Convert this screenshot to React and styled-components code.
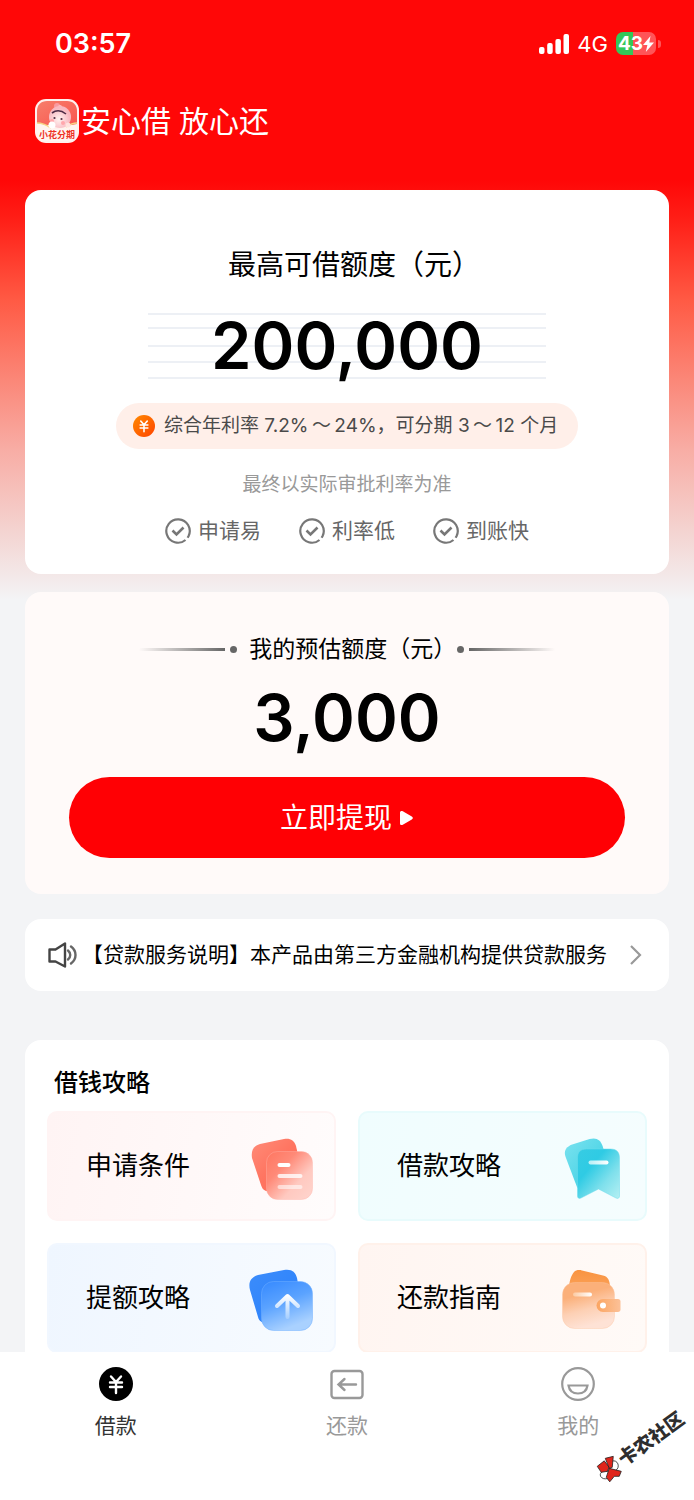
import styled, { createGlobalStyle } from 'styled-components';

const GlobalStyle = createGlobalStyle`
  * {
    box-sizing: border-box;
  }

  body {
    margin: 0;
    background: #f3f4f6;
    color: #000;
    font-family: Inter, "Noto Sans CJK SC", sans-serif;
    line-height: 1.4;
  }

  a {
    color: inherit;
    text-decoration: none;
  }

  h1, h2, p {
    margin: 0;
    font-weight: 400;
  }
`;

const Page = styled.div`
  height: 100vh;
  display: flex;
  flex-direction: column;
`;

const Content = styled.main`
  flex: 1;
  min-height: 0;
  overflow-y: auto;
  scrollbar-width: none;
  padding: 0 25px;
  background: #f3f4f6 linear-gradient(
    #ff0707 180px,
    #ff1f17 220px,
    #ff5a44 300px,
    #fb8778 380px,
    #f8ada5 450px,
    #f4d3d0 530px,
    #f3e8e8 575px,
    #f3f4f6 600px
  ) no-repeat;
`;

const StatusBar = styled.div`
  display: flex;
  align-items: center;
  justify-content: space-between;
  height: 88px;
  padding: 0 8px 0 30px;
  color: #fff;
`;

const Clock = styled.time`
  font-size: 27px;
  font-weight: 600;
`;

const StatusIcons = styled.div`
  display: flex;
  align-items: center;
  gap: 8px;
  font-size: 22px;
`;

const Battery = styled.span`
  display: flex;
  align-items: center;
  gap: 2px;

  &::after {
    content: '';
    width: 3px;
    height: 8px;
    border-radius: 0 4px 4px 0;
    background: #ff5457;
  }
`;

const BatteryLevel = styled.span`
  display: flex;
  align-items: center;
  justify-content: center;
  width: 40px;
  height: 23px;
  border-radius: 7px;
  background: linear-gradient(90deg, #34c759 43%, #ff5457 43%);
  font-size: 19px;
  font-weight: 700;
`;

const Brand = styled.header`
  display: flex;
  align-items: center;
  gap: 2px;
  height: 66px;
  margin-bottom: 36px;
  padding-left: 10px;
`;

const Slogan = styled.p`
  display: flex;
  gap: 8px;
  color: #fff;
  font-size: 30px;
  line-height: 40px;
`;

const Card = styled.section`
  border-radius: 16px;
  background: ${props => props.$tint || '#fff'};
`;

const HeroCard = styled(Card)`
  display: flex;
  flex-direction: column;
  align-items: center;
  padding: 55px 16px 27px;
`;

const HeroTitle = styled.h1`
  font-size: 28px;
  line-height: 40px;
`;

/* trims the blank half of a full-width bracket */
const Bracket = styled.span`
  font-feature-settings: "halt";
`;

const Amount = styled.p`
  font-size: 65px;
  font-weight: 600;
  line-height: 66px;
  text-align: center;
`;

const RuledAmount = styled(Amount)`
  width: 398px;
  max-width: 100%;
  margin: 28px 0 24px;
  background:
    linear-gradient(#edf0f5, #edf0f5) 0 0 / 100% 2px,
    linear-gradient(#edf0f5, #edf0f5) 0 14px / 100% 2px,
    linear-gradient(#edf0f5, #edf0f5) 0 32px / 100% 2px,
    linear-gradient(#edf0f5, #edf0f5) 0 48px / 100% 2px,
    linear-gradient(#edf0f5, #edf0f5) 0 64px / 100% 2px;
  background-repeat: no-repeat;
`;

const RatePill = styled.p`
  display: flex;
  align-items: center;
  gap: 9px;
  width: 462px;
  max-width: 100%;
  height: 46px;
  padding-left: 17px;
  border-radius: 23px;
  background: #ffefe9;
  color: #4a4a4a;
  font-size: 19px;
  white-space: nowrap;
`;

const Note = styled.p`
  margin: 22px 0 16px;
  color: #999;
  font-size: 19px;
  line-height: 28px;
`;

const Features = styled.ul`
  display: flex;
  gap: 38px;
  margin: 0;
  padding: 0;
  list-style: none;
`;

const Feature = styled.li`
  display: flex;
  align-items: center;
  gap: 7px;
  color: #666;
  font-size: 21px;
  line-height: 32px;
`;

const EstimateCard = styled(Card)`
  margin-top: 18px;
  padding: 41px 44px 36px;
`;

const EstimateTitle = styled.h2`
  display: flex;
  align-items: center;
  justify-content: center;
  gap: 12px;
  margin-bottom: 20px;
  font-size: 23px;
  line-height: 32px;
`;

const Rule = styled.span`
  display: flex;
  align-items: center;
  gap: 5px;
  flex-direction: ${props => (props.$right ? 'row-reverse' : 'row')};

  &::before {
    content: '';
    width: 86px;
    height: 3px;
    background: linear-gradient(${props => (props.$right ? '270deg' : '90deg')}, transparent, #666);
  }

  &::after {
    content: '';
    width: 7px;
    height: 7px;
    border-radius: 50%;
    background: #666;
  }
`;

const WithdrawButton = styled.button`
  display: flex;
  align-items: center;
  justify-content: center;
  gap: 7px;
  width: 100%;
  height: 81px;
  margin-top: 26px;
  border: 0;
  border-radius: 41px;
  background: #ff0004;
  color: #fff;
  font-family: inherit;
  font-size: 28px;
  line-height: 40px;
`;

const Notice = styled.a`
  display: flex;
  align-items: center;
  gap: 4px;
  height: 72px;
  margin: 25px 0 49px;
  padding: 0 27px 0 23px;
  border-radius: 16px;
  background: #fff;
  font-size: 21px;

  svg {
    flex: none;
  }
`;

const NoticeText = styled.span`
  flex: 1;
  overflow: hidden;
  white-space: nowrap;
`;

const GuideCard = styled(Card)`
  padding: 27px 22px 22px;
`;

const GuideTitle = styled.h2`
  margin-bottom: 12px;
  padding-left: 7px;
  font-size: 24px;
  font-weight: 500;
  line-height: 32px;
`;

const GuideGrid = styled.div`
  display: grid;
  grid-template-columns: 1fr 1fr;
  gap: 22px;
`;

const GuideTile = styled.a`
  display: flex;
  align-items: center;
  justify-content: space-between;
  height: 110px;
  padding: 0 16px 0 37px;
  border: 2px solid ${props => props.$edge};
  border-radius: 10px;
  background: linear-gradient(100deg, ${props => props.$from}, ${props => props.$to});
  font-size: 26px;
`;

const TabBar = styled.nav`
  display: grid;
  grid-template-columns: repeat(3, 1fr);
  height: 148px;
  padding-top: 15px;
  background: #fff;
`;

const Tab = styled.a`
  display: flex;
  flex-direction: column;
  align-items: center;
  gap: 9px;
  color: ${props => (props.$active ? '#333' : '#999')};
  font-size: 21px;
  line-height: 32px;
`;

const Watermark = styled.div`
  position: absolute;
  right: 2px;
  bottom: 40px;
  display: flex;
  align-items: center;
  color: #2e2e2e;
  font-size: 19px;
  font-weight: 900;
  line-height: 24px;
  transform: rotate(-36deg);
  pointer-events: none;
`;

const SignalIcon = () => (
  <svg width="30" height="20" viewBox="0 0 30 20" fill="#fff" aria-hidden="true">
    <rect x="0" y="13" width="5.500" height="7" rx="2" />
    <rect x="8.200" y="9" width="5.500" height="11" rx="2" />
    <rect x="16.400" y="5" width="5.500" height="15" rx="2" />
    <rect x="24.500" y="0" width="5.500" height="20" rx="2" />
  </svg>
);

const BoltIcon = () => (
  <svg width="11" height="16" viewBox="0 0 11 16" fill="#fff" aria-hidden="true">
    <path d="M7.500 0 0 9h4.400L2.800 16 11 6.600H6.300z" />
  </svg>
);

const AppIcon = () => (
  <svg width="44" height="44" viewBox="0 0 44 44" role="img" aria-label="小花分期">
    <defs>
      <linearGradient id="app-bg" x1="0" y1="0" x2="1" y2="1">
        <stop offset="0" stopColor="#f77e6c" />
        <stop offset="1" stopColor="#f9564e" />
      </linearGradient>
      <radialGradient id="app-face" cx=".45" cy=".6">
        <stop offset="0" stopColor="#fff3f1" />
        <stop offset="1" stopColor="#f8b8c0" />
      </radialGradient>
    </defs>
    <rect width="44" height="44" rx="11" fill="#fff0ed" />
    <path d="M2 26V12C2 6 6 2 12 2h20c6 0 10 4 10 10v14z" fill="url(#app-bg)" />
    <path d="M2 24c9 1 14 6 20 6s12-4 20-5v8H2z" fill="#fff4ed" />
    <path d="M2 24c7 0 11 3 14 5M42 24c-5 0-8 2-11 4" stroke="#f7d483" strokeWidth="1.500" fill="none" />
    <circle cx="22" cy="7" r="3" fill="#f99aa0" />
    <circle cx="25" cy="8" r="2" fill="#ffc0c2" />
    <circle cx="25" cy="18" r="11" fill="url(#app-face)" />
    <path d="M17 14c4-3 9-3 14 1" stroke="#4c2b45" strokeWidth="1.600" fill="none" />
    <circle cx="19.500" cy="19" r="1.100" fill="#553043" />
    <circle cx="26.500" cy="20" r="1.100" fill="#553043" />
    <circle cx="17" cy="22" r="2" fill="#ffa7ac" />
    <circle cx="28" cy="24" r="2" fill="#ffa7ac" />
    <circle cx="17" cy="26" r="3.500" fill="#fff" />
    <circle cx="33" cy="26" r="2.500" fill="#ffe3df" />
    <rect x="3" y="30" width="38" height="12" rx="5" fill="#fff4f1" />
    <text x="22" y="39" textAnchor="middle" fontSize="9" fontWeight="700" fill="#ee3124">小花分期</text>
  </svg>
);

const YuanStrokes = () => (
  <path
    d="M12 9.500 17 15l5-5.500M11 15.500h12M11 20h12M17 15v11"
    fill="none"
    stroke="#fff"
    strokeWidth="2.400"
    strokeLinecap="round"
  />
);

const CoinIcon = () => (
  <svg width="22" height="22" viewBox="0 0 34 34" aria-hidden="true">
    <defs>
      <linearGradient id="coin" x1="0" y1="0" x2="1" y2="1">
        <stop offset="0" stopColor="#ff8a00" />
        <stop offset="1" stopColor="#ff4300" />
      </linearGradient>
    </defs>
    <circle cx="17" cy="17" r="17" fill="url(#coin)" />
    <YuanStrokes />
  </svg>
);

const CheckIcon = () => (
  <svg width="26" height="26" viewBox="0 0 26 26" fill="none" stroke="#777" aria-hidden="true">
    <path d="M20.500 22A11.700 11.700 0 1 1 23.600 18l-1 1.800" strokeWidth="2.200" />
    <path d="m7.500 12.500 4 4 7-7" strokeWidth="2.600" />
  </svg>
);

const PlayIcon = () => (
  <svg width="15" height="16" viewBox="0 0 15 16" fill="#fff" aria-hidden="true">
    <path d="M1 2.500C1 1 2.500.500 3.800 1.200l9 5.400c1.400.800 1.400 2 0 2.800l-9 5.400C2.500 15.500 1 15 1 13.500z" />
  </svg>
);

const SpeakerIcon = () => (
  <svg width="30" height="28" viewBox="0 0 30 28" fill="none" stroke="#444" strokeWidth="2.400" strokeLinejoin="round" aria-hidden="true">
    <path d="M1.500 8.500h6L17 2.500v23l-9.500-5h-6z" />
    <path d="M20 9.500c3 2.500 3 6.500 0 9M23 5.500c6 4.500 6 12.500 0 17" stroke="#666" strokeLinecap="round" />
  </svg>
);

const ChevronIcon = () => (
  <svg width="13" height="22" viewBox="0 0 13 22" fill="none" stroke="#999" strokeWidth="2.200" aria-hidden="true">
    <path d="m2 2 9 9-9 9" />
  </svg>
);

const Gradient = ({ id, stops, x2 = 1, y2 = 1 }) => (
  <linearGradient id={id} x1="0" y1="0" x2={x2} y2={y2}>
    {stops.map((color, i) => (
      <stop key={i} offset={i / (stops.length - 1)} stopColor={color} />
    ))}
  </linearGradient>
);

const ConditionIcon = () => (
  <svg width="72" height="72" viewBox="0 0 72 72" aria-hidden="true">
    <defs>
      <Gradient id="cond-back" stops={['#ff8b78', '#ff7460', '#ff6a57']} />
      <Gradient id="cond-front" stops={['#ff7660', '#ff8a78', '#ffc9c0', '#ffd5ce']} />
    </defs>
    <path d="M14 14 38 9c6-1 10 1 12 7l5 22-28 24-7-1c-3-1-4-3-5-6L6 28c-1-7 1-12 8-14z" fill="url(#cond-back)" />
    <rect x="20.500" y="21.500" width="46" height="48" rx="11" fill="url(#cond-front)" stroke="#ffb5a9" strokeOpacity=".4" />
    <g stroke="#fff" strokeWidth="4" strokeLinecap="round">
      <path d="M33.500 35h9" />
      <path d="M33.500 46h21" strokeOpacity=".8" />
      <path d="M33.500 57h21" strokeOpacity=".55" />
    </g>
  </svg>
);

const BookmarkIcon = () => (
  <svg width="72" height="72" viewBox="0 0 72 72" aria-hidden="true">
    <defs>
      <Gradient id="mark-back" stops={['#7be2ef', '#35cde2']} />
      <Gradient id="mark-front" stops={['#37cce3', '#2fcbe4', '#7fe0ec', '#b4f0f3']} />
      <Gradient id="mark-bar" stops={['#b6eff6', '#ffffff']} y2={0} />
    </defs>
    <path d="M20 57 8.600 27c-2-6 0-9 5-12l19-6c7-2 11 1 13 7l4 13-28 30z" fill="url(#mark-back)" />
    <path
      d="M29.500 19h24c6 0 9 3 9 9v38c0 2-1.500 3-3.500 2L41.500 59 24 68c-2 1-3.500 0-3.500-2V28c0-6 3-9 9-9z"
      fill="url(#mark-front)"
      stroke="#6edceb"
      strokeOpacity=".5"
    />
    <rect x="31.500" y="30.500" width="20" height="4" rx="2" fill="url(#mark-bar)" />
  </svg>
);

const RaiseIcon = () => (
  <svg width="72" height="72" viewBox="0 0 72 72" aria-hidden="true">
    <defs>
      <Gradient id="raise-back" stops={['#3b8cfb', '#2b81fb']} />
      <Gradient id="raise-front" stops={['#3589ff', '#5ba3ff', '#a9d1ff']} x2={0.4} />
      <linearGradient id="raise-arrow" gradientUnits="userSpaceOnUse" x1="41" y1="33" x2="41" y2="56">
        <stop offset="0" stopColor="#fff" />
        <stop offset="1" stopColor="#a8d0ff" />
      </linearGradient>
    </defs>
    <path d="M12 13 38 8c7-1 11 1 13 8l4 22-34 23c-5 0-8-2-9-6L4 28c-2-8 1-13 8-15z" fill="url(#raise-back)" />
    <rect x="15.500" y="19.500" width="51" height="49" rx="12" fill="url(#raise-front)" stroke="#6fb0ff" strokeOpacity=".5" />
    <path
      d="M41.500 55V34M31 44l10.500-10L52 44"
      fill="none"
      stroke="url(#raise-arrow)"
      strokeWidth="4"
      strokeLinecap="round"
      strokeLinejoin="round"
    />
  </svg>
);

const WalletIcon = () => (
  <svg width="72" height="72" viewBox="0 0 72 72" aria-hidden="true">
    <defs>
      <Gradient id="wallet-back" stops={['#f99340', '#fba55f']} x2={0} />
      <Gradient id="wallet-front" stops={['#fbb07a', '#fbb07a', '#fdd0b4', '#fee2d5']} x2={0.3} />
      <Gradient id="wallet-bar" stops={['#fccba4', '#ffffff']} y2={0} />
      <Gradient id="wallet-clasp" stops={['#fba561', '#fcc198']} y2={0} />
    </defs>
    <path d="M12 28c0-9 2-14 5-18 2-2 5-2.500 8-1.500l21 5c5 1 7 5 7 12l-3 6H12z" fill="url(#wallet-back)" />
    <rect x="5.500" y="20.500" width="52" height="46" rx="12" fill="url(#wallet-front)" stroke="#fdc59f" strokeOpacity=".4" />
    <rect x="16" y="30.500" width="19" height="4" rx="2" fill="url(#wallet-bar)" />
    <path d="M46 37h15c1.500 0 2.500 1 2.500 2.500v8c0 1.500-1 2.500-2.500 2.500H46a6.500 6.500 0 0 1 0-13z" fill="url(#wallet-clasp)" />
    <circle cx="46" cy="43.500" r="3" fill="#fff" />
  </svg>
);

const LoanTabIcon = () => (
  <svg width="34" height="34" viewBox="0 0 34 34" aria-hidden="true">
    <circle cx="17" cy="17" r="17" fill="#000" />
    <YuanStrokes />
  </svg>
);

const RepayTabIcon = () => (
  <svg width="34" height="34" viewBox="0 0 34 34" fill="none" stroke="#999" strokeWidth="2.400" aria-hidden="true">
    <rect x="1.500" y="4" width="31" height="27" rx="3" />
    <path d="M26 17.500H9M14.500 12 8.500 17.500l6 5.500" strokeLinecap="round" />
  </svg>
);

const MineTabIcon = () => (
  <svg width="34" height="34" viewBox="0 0 34 34" fill="none" stroke="#999" strokeWidth="2.200" aria-hidden="true">
    <circle cx="17" cy="17" r="15.800" />
    <path d="M7.500 18.500h19c-.800 5-4.500 8-9.500 8s-8.700-3-9.500-8z" />
  </svg>
);

/* the emblem stays upright while its label is tilted */
const WatermarkLogo = () => (
  <svg width="26" height="26" viewBox="0 0 26 26" stroke="#222" strokeWidth=".8" overflow="visible" aria-hidden="true">
    <g transform="rotate(36 13 13)">
      <ellipse cx="16.500" cy="9.500" rx="4.500" ry="5" fill="#fff" />
      <ellipse cx="8" cy="18.500" rx="5" ry="4" fill="#fff" />
      <g fill="#e0251b">
        <path d="m0 10 7-5.500 5 6.500-2 4-6 1z" />
        <path d="m8 2 8-2-1 11-3 1z" />
        <path d="m12 12 12 3-2 5h-5l-4.500 5.500L9 21z" />
      </g>
    </g>
  </svg>
);

const features = ['申请易', '利率低', '到账快'];

const guides = [
  { label: '申请条件', Icon: ConditionIcon, from: '#fff4f4', to: '#fffcfc', edge: '#fff4f4' },
  { label: '借款攻略', Icon: BookmarkIcon, from: '#f0fdfe', to: '#f5fdfe', edge: '#e8fbfc' },
  { label: '提额攻略', Icon: RaiseIcon, from: '#eff6ff', to: '#f7fbff', edge: '#f1f7ff' },
  { label: '还款指南', Icon: WalletIcon, from: '#fff5f1', to: '#fffaf7', edge: '#fff1ea' },
];

const tabs = [
  { label: '借款', Icon: LoanTabIcon, active: true },
  { label: '还款', Icon: RepayTabIcon },
  { label: '我的', Icon: MineTabIcon },
];

const App = () => {
  return (
    <Page lang="zh-CN">
      <GlobalStyle />
      <Content>
        <StatusBar>
          <Clock>03:57</Clock>
          <StatusIcons>
            <SignalIcon />
            <span>4G</span>
            <Battery>
              <BatteryLevel>43<BoltIcon /></BatteryLevel>
            </Battery>
          </StatusIcons>
        </StatusBar>

        <Brand>
          <AppIcon />
          <Slogan>
            <span>安心借</span>
            <span>放心还</span>
          </Slogan>
        </Brand>

        <HeroCard>
          <HeroTitle>最高可借额度（元<Bracket>）</Bracket></HeroTitle>
          <RuledAmount>200,000</RuledAmount>
          <RatePill>
            <CoinIcon />
            <span>综合年利率 7.2%&thinsp;～&thinsp;24%，可分期 3&thinsp;～&thinsp;12 个月</span>
          </RatePill>
          <Note>最终以实际审批利率为准</Note>
          <Features>
            {features.map(feature => (
              <Feature key={feature}>
                <CheckIcon />
                {feature}
              </Feature>
            ))}
          </Features>
        </HeroCard>

        <EstimateCard $tint="#fffaf9">
          <EstimateTitle>
            <Rule />
            <span>我的预估额度（元<Bracket>）</Bracket></span>
            <Rule $right />
          </EstimateTitle>
          <Amount>3,000</Amount>
          <WithdrawButton type="button">
            立即提现
            <PlayIcon />
          </WithdrawButton>
        </EstimateCard>

        <Notice href="#notice">
          <SpeakerIcon />
          <NoticeText>【贷款服务说明】本产品由第三方金融机构提供贷款服务</NoticeText>
          <ChevronIcon />
        </Notice>

        <GuideCard>
          <GuideTitle>借钱攻略</GuideTitle>
          <GuideGrid>
            {guides.map(({ label, Icon, from, to, edge }) => (
              <GuideTile key={label} href="#guide" $from={from} $to={to} $edge={edge}>
                {label}
                <Icon />
              </GuideTile>
            ))}
          </GuideGrid>
        </GuideCard>
      </Content>

      <TabBar>
        {tabs.map(({ label, Icon, active }) => (
          <Tab key={label} href="#tab" $active={active}>
            <Icon />
            {label}
          </Tab>
        ))}
      </TabBar>

      <Watermark>
        <WatermarkLogo />
        卡农社区
      </Watermark>
    </Page>
  );
};

export default App;
